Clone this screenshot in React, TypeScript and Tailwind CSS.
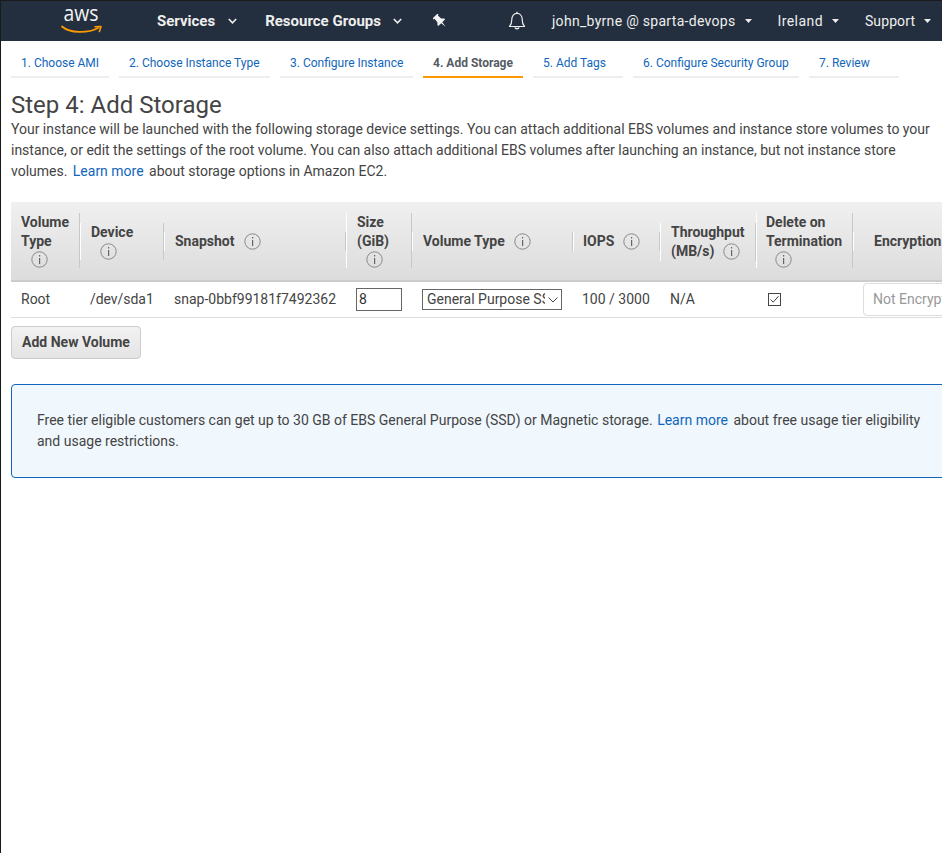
import React from "react";

const Info = ({ className = "" }: { className?: string }) => (
  <svg width="17" height="17" viewBox="0 0 17 17" className={`shrink-0 ${className}`} fill="none">
    <circle cx="8.5" cy="8.5" r="7.7" stroke="#888" strokeWidth="1" />
    <rect x="8" y="4" width="1.2" height="1.5" fill="#666" />
    <rect x="8" y="7" width="1.2" height="6" fill="#666" />
  </svg>
);

const Caret = ({ className = "" }: { className?: string }) => (
  <svg width="7" height="4" viewBox="0 0 7 4" className={className}>
    <path d="M0 0H7L3.5 4Z" fill="#eee" />
  </svg>
);

const Chev = ({ className = "" }: { className?: string }) => (
  <svg width="9" height="6" viewBox="0 0 9 6" fill="none" className={className}>
    <path d="M0.8 1L4.5 4.8L8.2 1" stroke="#eee" strokeWidth="1.6" />
  </svg>
);

const tabs: [string, string, boolean][] = [
  ["1. Choose AMI", "w-[98px]", false],
  ["2. Choose Instance Type", "w-[151px]", false],
  ["3. Configure Instance", "w-[133px]", false],
  ["4. Add Storage", "w-[100px]", true],
  ["5. Add Tags", "w-[90px]", false],
  ["6. Configure Security Group", "w-[166px]", false],
  ["7. Review", "w-[90px]", false],
];

const Th = ({ children, className = "" }: { children: React.ReactNode; className?: string }) => (
  <div className="flex items-center">
    <div className={`w-full border-l border-r border-l-white border-r-[#c8c8c8] ${className}`}>{children}</div>
  </div>
);

export default function App() {
  return (
    <div className="relative w-[942px] h-[853px] overflow-hidden bg-white border-l border-t border-[#1a1a1a] font-['Roboto',sans-serif] text-[#444]">
      <nav className="flex h-[40px] items-center bg-[#232f3e] text-[#eee]">
        <div className="w-[156px] shrink-0 pl-[59px]">
          <svg width="44" height="26" viewBox="0 0 44 26" fill="none">
            <text x="3.5" y="12.5" fontFamily="'Open Sans',sans-serif" fontSize="22" fill="#f4f4f4" textLength="35" lengthAdjust="spacingAndGlyphs">aws</text>
            <path d="M2 18.5C10 25.5 28 25.5 38 20" stroke="#f90" strokeWidth="1.8" strokeLinecap="round" />
            <path d="M35 18.8L41 18.5L39.4 23.5" stroke="#f90" strokeWidth="1.6" strokeLinecap="round" strokeLinejoin="round" />
          </svg>
        </div>
        <span className="text-[15px] font-bold">Services</span>
        <Chev className="ml-[13px]" />
        <span className="ml-[28px] text-[15px] font-bold">Resource Groups</span>
        <Chev className="ml-[12px]" />
        <svg width="14" height="14" viewBox="0 0 14 14" className="ml-[31px]" fill="#f4f4f4">
          <g transform="rotate(-45 7 7)">
            <path d="M3.6 0H10.4V1.6H9.3L9.7 6L11.8 8.2V9.4H7.8L7 15L6.2 9.4H2.2V8.2L4.3 6L4.7 1.6H3.6Z" />
          </g>
        </svg>
        <svg width="18" height="20" viewBox="0 0 18 20" fill="none" className="ml-[61px]">
          <path d="M1.5 15.5C3.5 13.5 3.8 12 3.8 8.5C3.8 4.8 6 2.4 9 2.4C12 2.4 14.2 4.8 14.2 8.5C14.2 12 14.5 13.5 16.5 15.5Z" stroke="#eee" strokeWidth="1.2" strokeLinejoin="round" />
          <path d="M7 16.4C7.4 18.2 10.6 18.2 11 16.4" stroke="#eee" strokeWidth="1.4" />
          <path d="M9 0.8V2.4" stroke="#eee" strokeWidth="1.2" />
        </svg>
        <span className="ml-[26px] text-[14px] tracking-[0.3px]">john_byrne @ sparta-devops</span>
        <Caret className="ml-[9px]" />
        <span className="ml-[26px] text-[14px] tracking-[0.42px]">Ireland</span>
        <Caret className="ml-[9px]" />
        <span className="ml-[26px] text-[14px] tracking-[0.1px]">Support</span>
        <Caret className="ml-[9px]" />
      </nav>

      <div className="flex gap-[10px] pl-[10px] pt-[11px]">
        {tabs.map(([t, w, active]) => (
          <div
            key={t}
            className={`${w} h-[26px] border-b-2 pl-[10px] pt-[1px] text-[12px] leading-[21px] whitespace-nowrap ${
              active ? "border-[#f90] font-bold text-[#545b64]" : "border-[#eee] text-[#1166bb]"
            }`}
          >
            {t}
          </div>
        ))}
      </div>

      <main className="pl-[10px]">
        <h1 className="mt-[12px] text-[24px] leading-[30px] font-normal text-[#444]">Step 4: Add Storage</h1>
        <p className="-mt-[1px] w-[925px] text-[14px] leading-[21px] text-[#444] tracking-[-0.007px]">
          Your instance will be launched with the following storage device settings. You can attach additional EBS volumes and instance store volumes to your
          instance, or edit the settings of the root volume. You can also attach additional EBS volumes after launching an instance, but not instance store
          volumes. <span className="ml-[2px] mr-[2px] text-[#1166bb]">Learn more</span> about storage options in Amazon EC2.
        </p>

        <div className="mt-[20px] w-[1100px]">
          <div className="grid h-[80px] grid-cols-[69px_84px_182px_66px_161px_87px_96px_97px_120px] border-b-2 border-[#ccc] bg-gradient-to-b from-[#f0f0f0] to-[#dcdcdc] text-[14px] leading-[19px] font-bold text-[#444]">
            <Th className="pl-[10px] border-l-0 -mt-[2px]">
              <div>Volume</div>
              <div>Type</div>
              <Info className="ml-[10px]" />
            </Th>
            <Th className="pl-[10px] mt-[1px]">
              <div>Device</div>
              <Info className="ml-[9px] mt-[1px]" />
            </Th>
            <Th className="pl-[10px] mt-[1px] flex items-center gap-[9px]">
              Snapshot <Info />
            </Th>
            <Th className="pl-[10px] -mt-[2px]">
              <div>Size</div>
              <div>(GiB)</div>
              <Info className="ml-[9px]" />
            </Th>
            <Th className="pl-[10px] mt-[1px] flex items-center gap-[9px]">
              Volume Type <Info />
            </Th>
            <Th className="pl-[9px] mt-[1px] flex items-center gap-[9px]">
              IOPS <Info />
            </Th>
            <Th className="pl-[10px] mt-[2px]">
              <div>Throughput</div>
              <div className="flex items-center gap-[9px]">
                (MB/s) <Info />
              </div>
            </Th>
            <Th className="pl-[9px] -mt-[2px]">
              <div>Delete on</div>
              <div>Termination</div>
              <Info className="ml-[9px]" />
            </Th>
            <Th className="pl-[20px] mt-[1px] border-r-0">Encryption</Th>
          </div>

          <div className="grid h-[36px] grid-cols-[69px_84px_182px_66px_161px_87px_96px_97px_120px] items-center border-b border-[#ddd] text-[14px] text-[#444]">
            <div className="pl-[10px]">Root</div>
            <div className="pl-[10px] tracking-[-0.05px]">/dev/sda1</div>
            <div className="pl-[10px]">snap-0bbf99181f7492362</div>
            <div className="pl-[10px]">
              <div className="h-[23px] w-[46px] border border-[#666] pl-[2px] leading-[21px] text-[#333]">8</div>
            </div>
            <div className="pl-[10px]">
              <div className="flex h-[21px] w-[140px] items-center overflow-hidden border border-[#666] pl-[4px]">
                <span className="w-[118px] shrink-0 overflow-hidden whitespace-nowrap leading-[19px]">General Purpose SSD (gp2)</span>
                <svg width="10" height="6" viewBox="0 0 10 6" fill="none" className="ml-[3px] shrink-0">
                  <path d="M0.5 0.5L5 5L9.5 0.5" stroke="#444" strokeWidth="1" />
                </svg>
              </div>
            </div>
            <div className="pl-[9px]">100 / 3000</div>
            <div className="pl-[10px]">N/A</div>
            <div className="pl-[12px]">
              <svg width="13" height="13" viewBox="0 0 13 13" fill="none">
                <rect x="0.5" y="0.5" width="12" height="12" stroke="#444" />
                <path d="M2.5 6.5L5.2 9.2L10.5 3.2" stroke="#444" strokeWidth="1" />
              </svg>
            </div>
            <div className="pl-[10px]">
              <div className="flex h-[33px] w-[110px] items-center rounded-[4px] border border-[#ddd] pl-[9px] text-[#999] whitespace-nowrap">Not Encrypted</div>
            </div>
          </div>
        </div>

        <button className="mt-[8px] flex h-[33px] w-[130px] items-center justify-center rounded-[4px] border border-[#ccc] bg-gradient-to-b from-[#f2f2f2] to-[#e4e4e4] text-[14px] font-bold text-[#444]">
          Add New Volume
        </button>

        <div className="mt-[25px] h-[94px] w-[1000px] rounded-[4px] border border-[#1166bb] bg-[#f0f7fd] pl-[25px] pt-[25px] text-[14px] leading-[21px] text-[#444]">
          <p className="w-[890px]">
            Free tier eligible customers can get up to 30 GB of EBS General Purpose (SSD) or Magnetic storage.{" "}
            <span className="ml-[1px] mr-[2px] text-[#1166bb]">Learn more</span> about free usage tier eligibility
            <br />
            and usage restrictions.
          </p>
        </div>
      </main>
    </div>
  );
}
